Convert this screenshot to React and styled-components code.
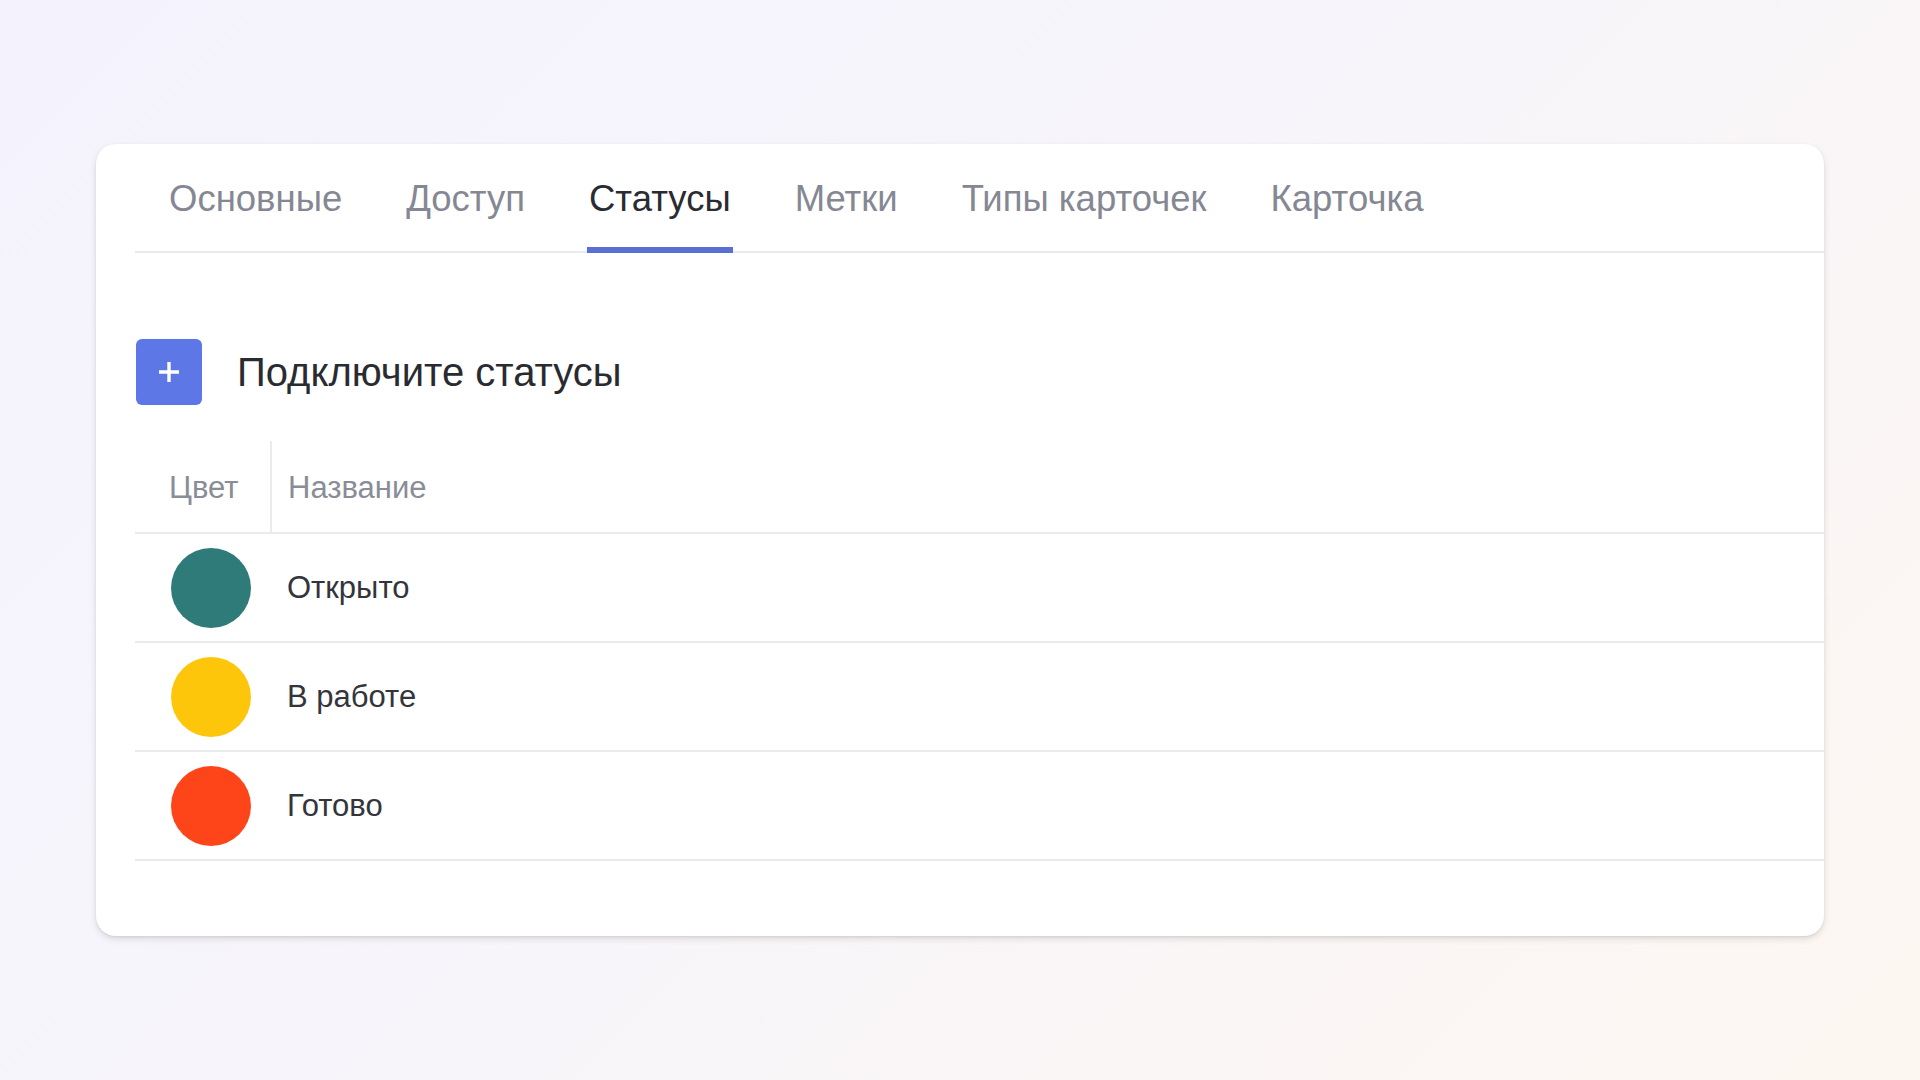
import React from "react";
import styled, { createGlobalStyle } from "styled-components";

const Global = createGlobalStyle`
  html, body { margin: 0; padding: 0; }
  body {
    width: 1920px;
    height: 1080px;
    overflow: hidden;
    font-family: "Liberation Sans", Arial, sans-serif;
    background: linear-gradient(135deg, #f4f3fd 0%, #f7f5fb 45%, #fdf7f1 100%);
  }
`;

const Page = styled.div`
  width: 1920px;
  height: 1080px;
  box-sizing: border-box;
  padding: 144px 96px 0 96px;
`;

const Card = styled.div`
  background: #ffffff;
  border-radius: 20px;
  box-shadow: 0 3px 6px rgba(60, 50, 40, 0.14), 0 1px 2px rgba(60, 50, 40, 0.08);
  padding: 0 0 75px 39px;
  display: flex;
  flex-direction: column;
`;

const TabBar = styled.div`
  display: flex;
  align-items: stretch;
  height: 109px;
  box-sizing: border-box;
  border-bottom: 2px solid #ebebef;
  padding-left: 34px;
  gap: 64px;
`;

const Tab = styled.div`
  position: relative;
  display: flex;
  align-items: center;
  font-size: 36.5px;
  padding-top: 2px;
  color: ${(p) => (p.$active ? "#2a2b33" : "#858893")};
  &::after {
    content: "";
    display: ${(p) => (p.$active ? "block" : "none")};
    position: absolute;
    left: -2px;
    right: -2px;
    bottom: -2px;
    height: 6px;
    background: #5a6fd3;
  }
`;

const Toolbar = styled.div`
  display: flex;
  align-items: center;
  gap: 35px;
  margin-top: 86px;
  margin-left: 1px;
`;

const AddButton = styled.button`
  width: 66px;
  height: 66px;
  border: none;
  border-radius: 6px;
  background: #5d77e6;
  display: flex;
  align-items: center;
  justify-content: center;
  padding: 0;
  cursor: pointer;
`;

const ToolbarTitle = styled.div`
  font-size: 40px;
  color: #2a2b31;
`;

const Table = styled.div`
  margin-top: 34px;
  display: flex;
  flex-direction: column;
`;

const Row = styled.div`
  display: grid;
  grid-template-columns: 135px 1fr;
  align-items: center;
  height: ${(p) => (p.$header ? "95px" : "109px")};
  box-sizing: border-box;
  border-bottom: 2px solid #ebebef;
`;

const HeadCell = styled.div`
  font-size: 31px;
  color: #8a8c97;
  height: 100%;
  display: flex;
  align-items: center;
  padding-left: ${(p) => (p.$first ? "34px" : "16px")};
  box-sizing: border-box;
  border-left: ${(p) => (p.$first ? "none" : "2px solid #ebebef")};
  margin-top: 4px;
`;

const ColorCell = styled.div`
  padding-left: 36px;
  display: flex;
  align-items: center;
`;

const Dot = styled.div`
  width: 80px;
  height: 80px;
  border-radius: 50%;
  background: ${(p) => p.$color};
`;

const NameCell = styled.div`
  font-size: 31px;
  color: #34353c;
  padding-left: 17px;
`;

const tabs = ["Основные", "Доступ", "Статусы", "Метки", "Типы карточек", "Карточка"];

const statuses = [
  { name: "Открыто", color: "#2f7b79" },
  { name: "В работе", color: "#fec60b" },
  { name: "Готово", color: "#fe4419" },
];

export default function App() {
  return (
    <>
      <Global />
      <Page>
        <Card>
          <TabBar>
            {tabs.map((t) => (
              <Tab key={t} $active={t === "Статусы"}>
                {t}
              </Tab>
            ))}
          </TabBar>
          <Toolbar>
            <AddButton aria-label="add">
              <svg width="22" height="22" viewBox="0 0 22 22">
                <path d="M11 1v20M1 11h20" stroke="#fff" strokeWidth="3.4" strokeLinecap="butt" />
              </svg>
            </AddButton>
            <ToolbarTitle>Подключите статусы</ToolbarTitle>
          </Toolbar>
          <Table>
            <Row $header>
              <HeadCell $first>Цвет</HeadCell>
              <HeadCell>Название</HeadCell>
            </Row>
            {statuses.map((s) => (
              <Row key={s.name}>
                <ColorCell>
                  <Dot $color={s.color} />
                </ColorCell>
                <NameCell>{s.name}</NameCell>
              </Row>
            ))}
          </Table>
        </Card>
      </Page>
    </>
  );
}
